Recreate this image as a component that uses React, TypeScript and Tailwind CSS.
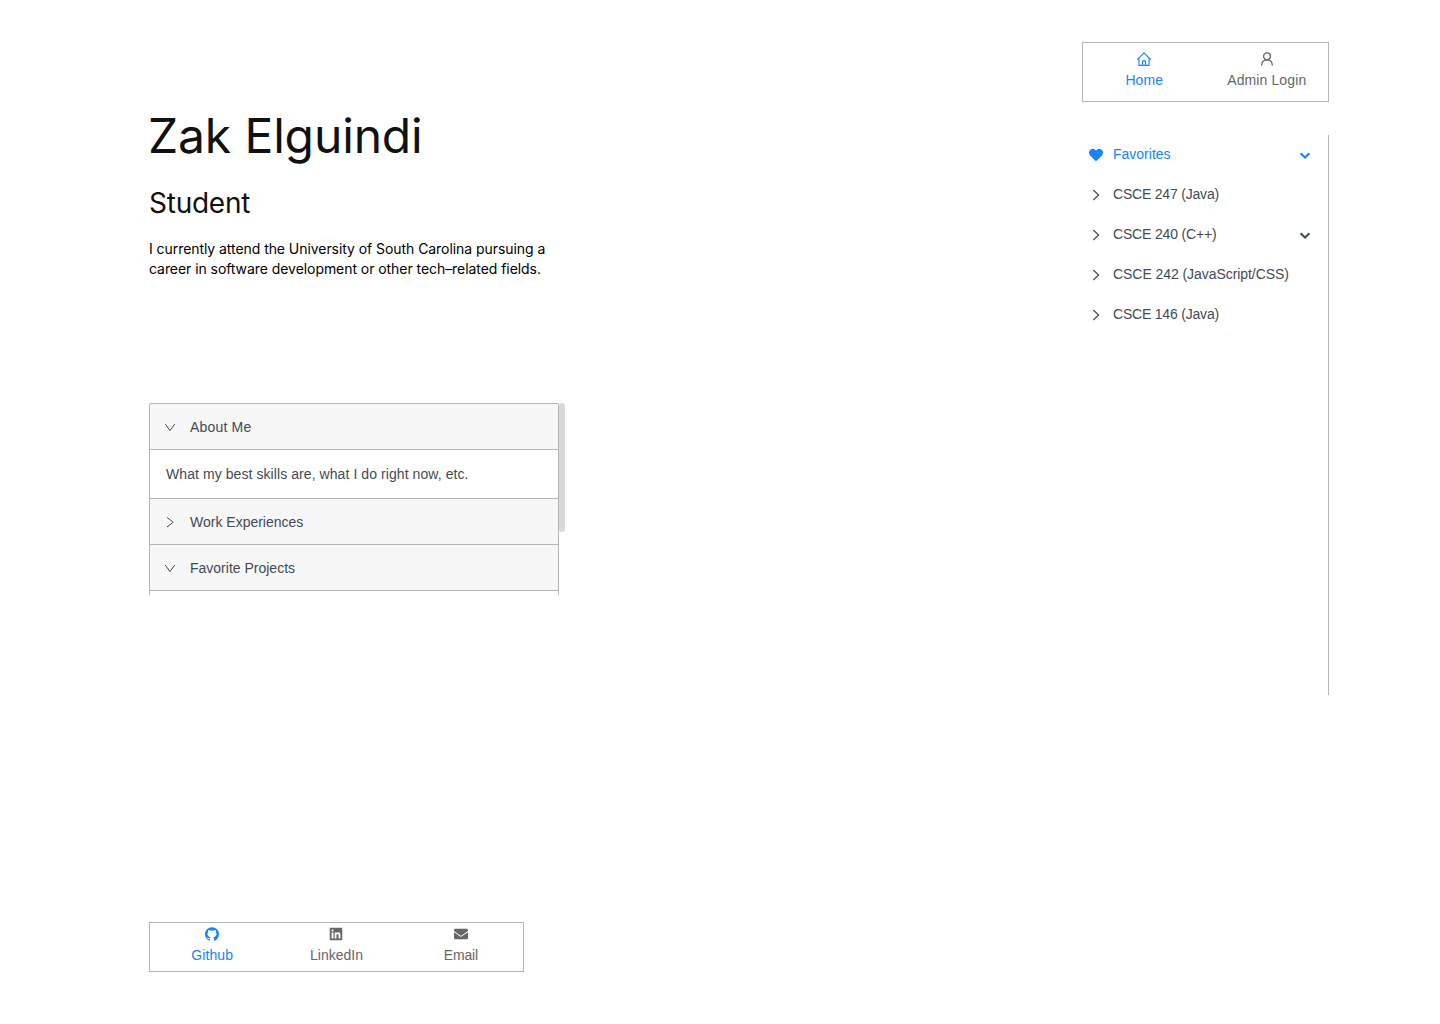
import type { ReactNode } from "react";
import { AiFillLinkedin, AiOutlineGithub } from "react-icons/ai";
import { FaHeart, FaEnvelope } from "react-icons/fa";

function Chevron({ down = false, bold = false, size = 12 }: { down?: boolean; bold?: boolean; size?: number }) {
  return (
    <svg width={size} height={size} viewBox="0 0 12 12" fill="none" stroke="currentColor" strokeWidth={bold ? 2 : 1}>
      <path d={bold ? "M1.6 4.3 6 8.5l4.4-4.2" : down ? "M1.3 3.1 6 9.6l4.7-6.5" : "M3 1.4 9.2 6.2 3 11"} />
    </svg>
  );
}

function MenuChevron() {
  return (
    <svg width="12" height="12" viewBox="0 0 12 12" fill="none" stroke="currentColor" strokeWidth="1.2">
      <path d="M3.3 1 8.6 6l-5.3 5" />
    </svg>
  );
}

function HomeIcon() {
  return (
    <svg width="16" height="16" viewBox="0 0 16 16" fill="none" stroke="currentColor" strokeWidth="1.15" strokeLinejoin="round">
      <path d="M1.2 8.6 8 1.9l6.8 6.7M3 7.4v6.9h10V7.4M6.5 14.3V9.9h3v4.4" />
    </svg>
  );
}

function UserIcon() {
  return (
    <svg width="16" height="16" viewBox="0 0 16 16" fill="none" stroke="currentColor" strokeWidth="1.35" strokeLinecap="round">
      <circle cx="8" cy="5.3" r="3.4" />
      <path d="M2.7 14.1c.1-3 2.3-5.4 5.3-5.4s5.2 2.4 5.3 5.4" />
    </svg>
  );
}

function TabItem({ icon, label, active, tracking = "" }: { icon: ReactNode; label: string; active?: boolean; tracking?: string }) {
  return (
    <div className={`flex flex-1 flex-col items-center ${active ? "text-[#1683ff]" : "text-[#666666]"}`}>
      <div className="flex h-4 items-center">{icon}</div>
      <span className={`mt-[3px] text-sm leading-5 whitespace-nowrap ${tracking}`}>{label}</span>
    </div>
  );
}

function PanelHeader({ label, open, tracking = "" }: { label: string; open?: boolean; tracking?: string }) {
  return (
    <div className="flex h-[46px] shrink-0 items-center gap-[14px] border-b border-[#b5b5b5] bg-[#f7f7f7] pt-px pl-[14px]">
      <Chevron down={open} />
      <span className={tracking}>{label}</span>
    </div>
  );
}

function MenuItem({ label, active, expandable, tracking = "" }: { label: string; active?: boolean; expandable?: boolean; tracking?: string }) {
  return (
    <div className={`flex h-10 items-center pr-[17px] pl-1.5 ${active ? "text-[#1683ff]" : "text-[#3f4b54]"}`}>
      <span className="flex w-4 justify-center">{active ? <FaHeart size={14} /> : <MenuChevron />}</span>
      <span className={`ml-[9px] flex-1 pb-0.5 whitespace-nowrap ${tracking}`}>{label}</span>
      {expandable && <Chevron bold />}
    </div>
  );
}

export default function App() {
  return (
    <div className="flex h-[1024px] w-[1440px] justify-between bg-white pr-[111px] pl-[149px] font-['Liberation_Sans',sans-serif] text-sm leading-5">
      <main className="flex w-[416px] flex-col">
        <header className="font-['Inter',sans-serif] text-[#111111]">
          <h1 className="mt-[106px] -ml-px text-[48px] leading-[60px] tracking-[-0.14px] whitespace-nowrap">Zak Elguindi</h1>
          <h2 className="mt-[17px] text-[28px] leading-10 tracking-[-0.25px] whitespace-nowrap">Student</h2>
          <p className="mt-4 text-sm leading-5 tracking-[-0.06px] whitespace-nowrap text-black">
            <span className="block">I currently attend the University of South Carolina pursuing a</span>
            <span className="block">career in software development or other tech–related fields.</span>
          </p>
        </header>

        <section className="mt-[124px] flex h-[192px] overflow-hidden text-[#3f4b54]">
          <div className="flex w-[410px] flex-col rounded-t-[2px] border border-b-0 border-[#b5b5b5]">
            <PanelHeader label="About Me" open tracking="tracking-[0.18px]" />
            <div className="flex h-[49px] shrink-0 items-center border-b border-[#b5b5b5] pb-px pl-4 tracking-[0.075px]">
              What my best skills are, what I do right now, etc.
            </div>
            <PanelHeader label="Work Experiences" />
            <PanelHeader label="Favorite Projects" open />
          </div>
          <div className="h-[129px] w-1.5 rounded-[3px] bg-[#dadada]" />
        </section>

        <nav className="mt-[327px] flex h-[50px] w-[375px] border border-[#b5b5b5] pt-[3px]">
          <TabItem active label="Github" tracking="tracking-[0.12px]" icon={<AiOutlineGithub size={16} />} />
          <TabItem label="LinkedIn" icon={<AiFillLinkedin size={16} />} />
          <TabItem label="Email" tracking="tracking-[-0.15px]" icon={<FaEnvelope size={14} />} />
        </nav>
      </main>

      <aside className="flex w-[247px] flex-col pt-[42px]">
        <nav className="flex h-[60px] border border-[#b5b5b5] pt-2">
          <TabItem active label="Home" tracking="tracking-[0.1px]" icon={<HomeIcon />} />
          <TabItem label="Admin Login" tracking="tracking-[0.12px]" icon={<UserIcon />} />
        </nav>
        <div className="mt-[33px] h-[560px] border-r border-[#b5b5b5]">
          <MenuItem active expandable label="Favorites" />
          <MenuItem label="CSCE 247 (Java)" tracking="tracking-[-0.2px]" />
          <MenuItem expandable label="CSCE 240 (C++)" tracking="tracking-[-0.17px]" />
          <MenuItem label="CSCE 242 (JavaScript/CSS)" tracking="tracking-[-0.06px]" />
          <MenuItem label="CSCE 146 (Java)" tracking="tracking-[-0.2px]" />
        </div>
      </aside>
    </div>
  );
}
